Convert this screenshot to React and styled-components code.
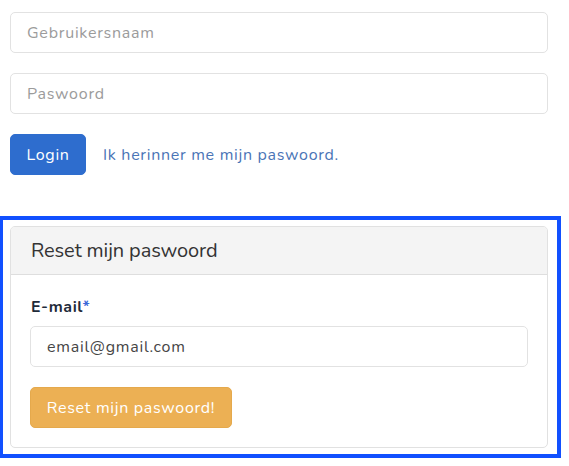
import React from "react";
import styled, { createGlobalStyle } from "styled-components";

const Global = createGlobalStyle`
  html, body { margin: 0; padding: 0; background: #fff; }
  body { font-family: "Nunito", Lato, "Noto Sans", sans-serif; color: #333; }
  * { box-sizing: border-box; }
`;

const Page = styled.div`
  padding-top: 12px;
  width: 569px;
`;

const LoginForm = styled.form`
  width: 538px;
  margin-left: 10px;
  display: flex;
  flex-direction: column;
  gap: 20px;
`;

const TextInput = styled.input`
  display: block;
  width: 100%;
  height: 41px;
  padding: 0 16px;
  border: 1px solid #e2e2e2;
  border-radius: 5px;
  font-family: inherit;
  font-size: 16px;
  letter-spacing: 0.75px;
  color: #454545;
  background: #fff;
  outline: none;
  &::placeholder { color: #9b9b9b; }
`;

const ActionRow = styled.div`
  display: flex;
  align-items: center;
  gap: 17px;
`;

const Button = styled.button`
  height: 41px;
  width: ${(p) => p.$width}px;
  padding: 0;
  border-radius: 5px;
  font-family: inherit;
  font-size: 16px;
  letter-spacing: 0.7px;
  color: #fff;
  background: ${(p) => (p.$variant === "warning" ? "#ecb054" : "#2e6dce")};
  border: 1px solid ${(p) => (p.$variant === "warning" ? "#e5a94c" : "#2e6dce")};
  cursor: pointer;
`;

const ForgotLink = styled.a`
  font-size: 16px;
  letter-spacing: 0.7px;
  color: #4a74b6;
  text-decoration: none;
`;

const Highlight = styled.section`
  margin-top: 41px;
  width: 561px;
  height: 242px;
  border: 4px solid #1150ff;
  border-left-width: 3px;
  padding: 6px 9px 6px 7px;
  display: flex;
`;

const Card = styled.div`
  flex: 1;
  border: 1px solid #e1e1e1;
  border-radius: 5px;
  display: flex;
  flex-direction: column;
  overflow: hidden;
`;

const CardHeader = styled.div`
  height: 49px;
  background: #f4f4f4;
  border-bottom: 1px solid #dedede;
  padding: 0 20px;
  display: flex;
  align-items: center;
  font-size: 20px;
  letter-spacing: -0.1px;
  color: #333;
`;

const CardBody = styled.div`
  padding: 20px 19px 19px;
  display: flex;
  flex-direction: column;
`;

const Label = styled.label`
  font-size: 16px;
  font-weight: 700;
  line-height: 24px;
  letter-spacing: 0.6px;
  color: #1f2b3a;
  margin: 0 0 7px 1px;
`;

const Required = styled.span`
  color: #3a68d8;
`;

const ResetButtonRow = styled.div`
  margin-top: 20px;
`;

export default function App() {
  return (
    <Page>
      <Global />
      <LoginForm onSubmit={(e) => e.preventDefault()}>
        <TextInput placeholder="Gebruikersnaam" />
        <TextInput type="password" placeholder="Paswoord" />
        <ActionRow>
          <Button $width={76}>Login</Button>
          <ForgotLink href="#">Ik herinner me mijn paswoord.</ForgotLink>
        </ActionRow>
      </LoginForm>
      <Highlight>
        <Card>
          <CardHeader>Reset mijn paswoord</CardHeader>
          <CardBody>
            <Label>
              E-mail<Required>*</Required>
            </Label>
            <TextInput defaultValue="email@gmail.com" />
            <ResetButtonRow>
              <Button $width={202} $variant="warning">Reset mijn paswoord!</Button>
            </ResetButtonRow>
          </CardBody>
        </Card>
      </Highlight>
    </Page>
  );
}
